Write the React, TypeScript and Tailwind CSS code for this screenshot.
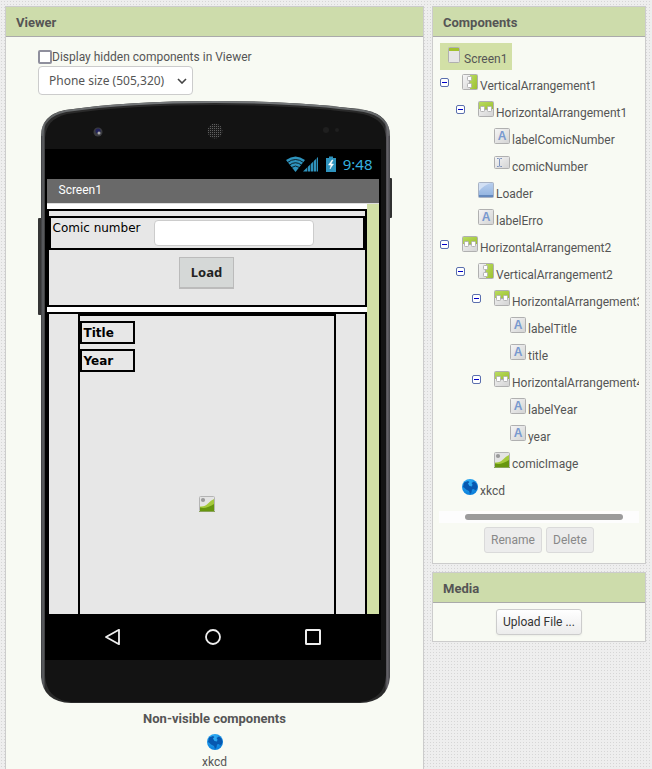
import React from "react";

type IconKind = "screen" | "vertical" | "horizontal" | "label" | "textbox" | "button" | "image" | "web";

interface TreeItem {
  name: string;
  icon: IconKind;
  depth: number;
  open?: boolean;
}

const TREE: TreeItem[] = [
  { name: "VerticalArrangement1", icon: "vertical", depth: 0, open: true },
  { name: "HorizontalArrangement1", icon: "horizontal", depth: 1, open: true },
  { name: "labelComicNumber", icon: "label", depth: 2 },
  { name: "comicNumber", icon: "textbox", depth: 2 },
  { name: "Loader", icon: "button", depth: 1 },
  { name: "labelErro", icon: "label", depth: 1 },
  { name: "HorizontalArrangement2", icon: "horizontal", depth: 0, open: true },
  { name: "VerticalArrangement2", icon: "vertical", depth: 1, open: true },
  { name: "HorizontalArrangement3", icon: "horizontal", depth: 2, open: true },
  { name: "labelTitle", icon: "label", depth: 3 },
  { name: "title", icon: "label", depth: 3 },
  { name: "HorizontalArrangement4", icon: "horizontal", depth: 2, open: true },
  { name: "labelYear", icon: "label", depth: 3 },
  { name: "year", icon: "label", depth: 3 },
  { name: "comicImage", icon: "image", depth: 2 },
  { name: "xkcd", icon: "web", depth: 0 },
];

const INDENT = ["pl-0", "pl-4", "pl-8", "pl-12"];

function Gradients() {
  return (
    <svg className="absolute size-0" aria-hidden="true">
      <defs>
        <linearGradient id="grey" x1="0" y1="0" x2="1" y2="1">
          <stop offset="0" stopColor="#f6f6f6" />
          <stop offset="1" stopColor="#d3d3d3" />
        </linearGradient>
        <linearGradient id="green" x1="0" y1="0" x2="1" y2="1">
          <stop offset="0" stopColor="#b9dc62" />
          <stop offset="1" stopColor="#9dc02e" />
        </linearGradient>
        <linearGradient id="blue" x1="0" y1="0" x2="0" y2="1">
          <stop offset="0" stopColor="#b9cfee" />
          <stop offset="1" stopColor="#8fb2df" />
        </linearGradient>
        <radialGradient id="globe" cx="0.4" cy="0.25" r="0.8">
          <stop offset="0" stopColor="#35b4f8" />
          <stop offset="1" stopColor="#067ad8" />
        </radialGradient>
      </defs>
    </svg>
  );
}

function ComponentIcon({ kind }: { kind: IconKind }) {
  return (
    <svg viewBox="0 0 16 16" className="size-4 shrink-0" aria-hidden="true">
      {kind === "screen" && (
        <>
          <rect x="2.5" y="0.5" width="11" height="15" rx="1" fill="#e6e6e6" stroke="#b0b0b0" />
          <rect x="3" y="1" width="10" height="3" fill="#a2c22f" />
        </>
      )}
      {kind === "vertical" && (
        <>
          <rect x="0.5" y="0.5" width="15" height="15" rx="1" fill="url(#grey)" stroke="#b0b0b0" />
          <rect x="8" y="1" width="7" height="14" fill="url(#green)" />
          <path d="M7.500 6v4" stroke="#aaa" />
          <rect x="5.5" y="2.5" width="4" height="4" rx="0.8" fill="#fff" stroke="#b3b3b3" />
          <rect x="5.5" y="9.5" width="4" height="4" rx="0.8" fill="#fff" stroke="#b3b3b3" />
        </>
      )}
      {kind === "horizontal" && (
        <>
          <rect x="0.5" y="0.5" width="15" height="15" rx="1" fill="url(#grey)" stroke="#b0b0b0" />
          <rect x="1" y="1" width="14" height="7" fill="url(#green)" />
          <path d="M6 8.500h4" stroke="#aaa" />
          <rect x="2.5" y="5.5" width="4" height="5" rx="0.8" fill="#fff" stroke="#b3b3b3" />
          <rect x="9.5" y="5.5" width="4" height="5" rx="0.8" fill="#fff" stroke="#b3b3b3" />
        </>
      )}
      {kind === "label" && (
        <>
          <rect x="0.5" y="0.5" width="15" height="15" rx="1" fill="url(#grey)" stroke="#b0b0b0" />
          <text x="8" y="12" textAnchor="middle" fontSize="12" fontWeight="700" fontFamily="Liberation Sans, sans-serif" fill="#7899cf">
            A
          </text>
        </>
      )}
      {kind === "textbox" && (
        <>
          <rect x="0.5" y="1.5" width="15" height="12" rx="1" fill="url(#grey)" stroke="#b0b0b0" />
          <path d="M3 3.500h1.500l1 .5 1-.5H8M5.500 4v7M3 11.500h1.500l1-.5 1 .5H8" fill="none" stroke="#7f94bd" />
        </>
      )}
      {kind === "button" && (
        <>
          <rect x="0.5" y="0.5" width="15" height="15" rx="1" fill="url(#blue)" stroke="#a9b3c4" />
          <path d="M1 1h12Q6 3 1 9z" fill="#d2e0f4" />
          <path d="M1 14h14" stroke="#6489bd" strokeWidth="2" />
        </>
      )}
      {kind === "image" && (
        <>
          <rect x="0.5" y="0.5" width="15" height="15" rx="1" fill="#e4e4e4" stroke="#b4b4b4" />
          <circle cx="4" cy="4" r="2.100" fill="#9a9a9a" />
          <path d="M1 10.500Q6 11 9 7.500T15 3v12H1z" fill="#a5c93c" />
          <path d="M1 11.500Q5 12.500 9 11T15 8v8H1z" fill="#67960f" />
          <path d="M0 15.500h16" stroke="#8aa35a" />
        </>
      )}
      {kind === "web" && (
        <>
          <circle cx="8" cy="8" r="8" fill="url(#globe)" />
          <path d="M2 3.500L6 2l1.500 1L6 4.500 7.500 7 10 7.500 10.500 5.500 9.500 4 12 2.500 14 4 15.500 7 15 10l-2 1.500L12 10l-2 .5-.5 3L8 15l-1-3-3-1.500L2.500 9 1 8z" fill="#0758b0" />
        </>
      )}
    </svg>
  );
}

function Panel({ title, className = "", children }: { title: string; className?: string; children: React.ReactNode }) {
  return (
    <section className={`border border-[#ccc] bg-[#f8faf3] ${className}`}>
      <h2 className="h-[30px] border-b border-[#aaa] bg-[#cddcab] px-[10px] text-[13px] leading-[31px] font-bold text-[#555]">{title}</h2>
      {children}
    </section>
  );
}

function PhoneFrame() {
  return (
    <svg viewBox="0 0 354 603" className="absolute inset-0 size-full" preserveAspectRatio="none" aria-hidden="true">
      <defs>
        <linearGradient id="edge" x1="0" x2="1">
          <stop offset="0" stopColor="#3a3b3e" />
          <stop offset="0.006" stopColor="#606265" />
          <stop offset="0.013" stopColor="#2a2a2a" />
          <stop offset="0.985" stopColor="#2a2a2a" />
          <stop offset="0.992" stopColor="#66646a" />
          <stop offset="1" stopColor="#444448" />
        </linearGradient>
        <linearGradient id="rim" x1="0" y1="0" x2="0" y2="1">
          <stop offset="0" stopColor="#75787a" />
          <stop offset="1" stopColor="#75787a" stopOpacity="0.4" />
        </linearGradient>
        <pattern id="mesh" width="2" height="2" patternUnits="userSpaceOnUse">
          <rect width="2" height="2" fill="#1b1b1b" />
          <rect width="1" height="1" fill="#606060" />
        </pattern>
      </defs>
      <rect x="0" y="118" width="5" height="97" rx="1" fill="#353535" />
      <rect x="349" y="78" width="5" height="40" rx="1" fill="#303030" />
      <path d="M3 36Q3 15 27 10Q90 1 177 1T327 10Q352 15 352 36V577Q350 602 322 603H33Q5 602 3 577Z" fill="url(#edge)" />
      <path d="M4 36Q4 16 28 11Q90 2 177 2T326 11Q351 16 351 36" fill="none" stroke="url(#rim)" strokeWidth="2" />
      <path d="M7 38Q8 19 29 14Q90 5 177 5T325 14Q347 19 348 38V575Q347 600 321 602H34Q8 600 7 575Z" fill="#131313" />
      <circle cx="60" cy="32" r="4.500" fill="#3a3b40" />
      <circle cx="60" cy="31" r="2.500" fill="#22225a" />
      <circle cx="61" cy="33" r="1.500" fill="#aaa" />
      <circle cx="177" cy="31" r="7.500" fill="url(#mesh)" />
      <circle cx="288" cy="30" r="3" fill="#1f1f1f" />
      <circle cx="299" cy="30" r="2" fill="#1f1f1f" />
    </svg>
  );
}

function StatusBar() {
  return (
    <div className="flex h-[30px] items-center justify-end bg-black pr-[6px] font-['Noto_Sans',sans-serif] text-[15px] text-[#35b0df]">
      <svg viewBox="0 0 51 16" className="mr-[6px] h-4 w-[51px]" aria-hidden="true">
        <path d="M0 4Q9.500 -3 19 4L9.500 16Z" fill="#2e93bd" />
        <path d="M1.500 6.500Q9.500 .5 17.500 6.500M3.500 9Q9.500 4.500 15.500 9M5.500 11.500Q9.500 8.500 13.500 11.500" fill="none" stroke="#000" strokeWidth="0.800" />
        <path d="M17 15.500L32 1V15.500Z" fill="#2e93bd" />
        <path d="M21.500 8V16M24.500 5V16M27.500 2V16M30.500 0V16" stroke="#000" strokeWidth="0.600" />
        <path d="M40 2h3V0.500h4V2h3v14H40Z" fill="#2e93bd" />
        <path d="M46 4l-3.500 5h2.500l-1 4 3.500-5h-2.500l2-4z" fill="#fff" stroke="#fff" strokeWidth="0.500" />
      </svg>
      <span>9:48</span>
    </div>
  );
}

function Phone() {
  return (
    <div className="relative mx-auto mt-[5px] w-[354px] pt-[49px] pr-[11px] pb-[43px] pl-[7px]">
      <PhoneFrame />
      <div className="relative bg-black px-[2px]">
        <StatusBar />
        <div className="h-6 bg-[#696969] px-3 text-xs leading-[22px] text-white">Screen1</div>
        <div className="flex h-[411px] overflow-hidden border-t border-[#ddd] bg-[#d2e0a6] pr-3 font-['DejaVu_Sans',sans-serif] text-xs text-black">
          <div className="flex flex-1 flex-col gap-[5px] bg-white pt-[5px]">
            <div className="h-[98px] border-2 border-black bg-[#e7e7e7] pt-[5px]">
              <div className="flex h-[34px] border-2 border-black px-[2px] pt-[2px]">
                <label htmlFor="comic" className="w-[101px] leading-4">Comic number</label>
                <input id="comic" className="h-[26px] w-40 rounded border border-[#ccc] bg-white px-2" />
              </div>
              <button className="mx-auto mt-[7px] block h-8 w-[55px] border border-b-2 border-[#bbb] bg-[#d5d8d7] font-['Noto_Sans',sans-serif] text-[13px] font-bold text-[#222]">Load</button>
            </div>
            <div className="flex flex-1 justify-center border-2 border-b-0 border-black bg-[#e7e7e7]">
              <div className="flex w-[258px] flex-col border-2 border-b-0 border-black pt-[5px]">
                <div className="mb-[5px] h-[23px] w-[55px] border-2 border-black px-[2px] leading-[21px] font-bold">Title</div>
                <div className="h-[23px] w-[55px] border-2 border-black px-[2px] leading-[21px] font-bold">Year</div>
                <div className="mx-auto mt-[124px]">
                  <ComponentIcon kind="image" />
                </div>
              </div>
            </div>
          </div>
        </div>
        <nav className="flex h-[46px] items-center justify-center gap-[84px]">
          <button aria-label="Back">
            <svg viewBox="0 0 16 16" className="size-4" fill="none" stroke="#eee" strokeWidth="1.800" strokeLinejoin="round">
              <path d="M14 0.800V15.200L1 8Z" />
            </svg>
          </button>
          <button aria-label="Home">
            <svg viewBox="0 0 16 16" className="size-4" fill="none" stroke="#eee" strokeWidth="1.800">
              <circle cx="8" cy="8" r="7" />
            </svg>
          </button>
          <button aria-label="Recent apps">
            <svg viewBox="0 0 16 16" className="size-4" fill="none" stroke="#eee" strokeWidth="2">
              <rect x="1" y="1" width="14" height="14" rx="0.500" />
            </svg>
          </button>
        </nav>
      </div>
    </div>
  );
}

function ComponentTree() {
  return (
    <div className="mx-[6px] overflow-hidden pt-[6px] pl-[1px] text-xs whitespace-nowrap">
      <div className="flex h-[27px] w-[72px] items-start bg-[#d2e0a6] pt-1 pl-[6px]">
        <ComponentIcon kind="screen" />
        <span className="ml-[2px] leading-[25px]">Screen1</span>
      </div>
      <ul>
        {TREE.map((item) => (
          <li key={item.name} className={`flex h-[27px] items-start pt-1 ${INDENT[item.depth]}`}>
            <span className="w-[22px] shrink-0 pt-1">
              {item.open && (
                <button aria-label={`Collapse ${item.name}`} className="flex size-[9px] items-center justify-center rounded-[2px] border border-[#5b6fae] bg-white">
                  <span className="h-px w-[5px] bg-[#0000c8]" />
                </button>
              )}
            </span>
            <ComponentIcon kind={item.icon} />
            <span className="ml-[2px] leading-[25px]">{item.name}</span>
          </li>
        ))}
      </ul>
    </div>
  );
}

export default function App() {
  return (
    <div className="flex min-h-screen gap-2 bg-[#eeeeee] bg-[radial-gradient(#d6d6d6,transparent_1px)] bg-size-[3px_3px] pt-[6px] pr-[6px] pl-[5px] font-[Roboto,sans-serif] text-[#555]">
      <Gradients />
      <Panel title="Viewer" className="min-w-0 flex-1 border-b-0">
        <div className="pt-3 pl-8">
          <label className="flex h-4 items-center text-xs">
            <input type="checkbox" className="size-[14px] appearance-none rounded-[2px] border-2 border-[#8f8f9d] bg-white" />
            Display hidden components in Viewer
          </label>
          <div className="relative mt-[1px] w-[155px]">
            <select aria-label="Screen size" className="block h-[29px] w-full appearance-none rounded border border-[#ccc] bg-white px-[10px] font-['Noto_Sans',sans-serif] text-xs">
              <option>Phone size (505,320)</option>
            </select>
            <svg viewBox="0 0 10 6" className="pointer-events-none absolute top-3 right-[6px] h-[6px] w-[10px]" fill="none" stroke="#444" strokeWidth="1.600">
              <path d="M1 1l4 4 4-4" />
            </svg>
          </div>
        </div>
        <Phone />
        <div className="flex flex-col items-center pt-[6px] text-xs">
          <h3 className="text-[13px] leading-[19px] font-bold">Non-visible components</h3>
          <div className="mt-[6px] flex flex-col items-center">
            <ComponentIcon kind="web" />
            <span className="mt-1 leading-4">xkcd</span>
          </div>
        </div>
      </Panel>
      <div className="flex w-[214px] shrink-0 flex-col gap-2">
        <Panel title="Components">
          <ComponentTree />
          <div className="mx-[6px] mt-[9px] h-3 bg-[#fdfdfd] pt-[3px] pl-[26px]">
            <div className="h-[6px] w-[158px] rounded-full bg-[#9b9b9b]" />
          </div>
          <div className="mt-1 mb-[10px] flex justify-center gap-1 text-xs text-[#888]">
            <button disabled className="h-[26px] w-[58px] rounded-[3px] border border-[#dadada] bg-[#ececec]">Rename</button>
            <button disabled className="h-[26px] w-12 rounded-[3px] border border-[#dadada] bg-[#ececec]">Delete</button>
          </div>
        </Panel>
        <Panel title="Media">
          <div className="flex justify-center pt-[6px] pb-[6px]">
            <button className="h-[26px] w-[86px] rounded-[3px] border border-[#ccc] bg-linear-to-b from-white to-[#ececec] text-xs text-[#333] shadow-xs">Upload File ...</button>
          </div>
        </Panel>
      </div>
    </div>
  );
}
